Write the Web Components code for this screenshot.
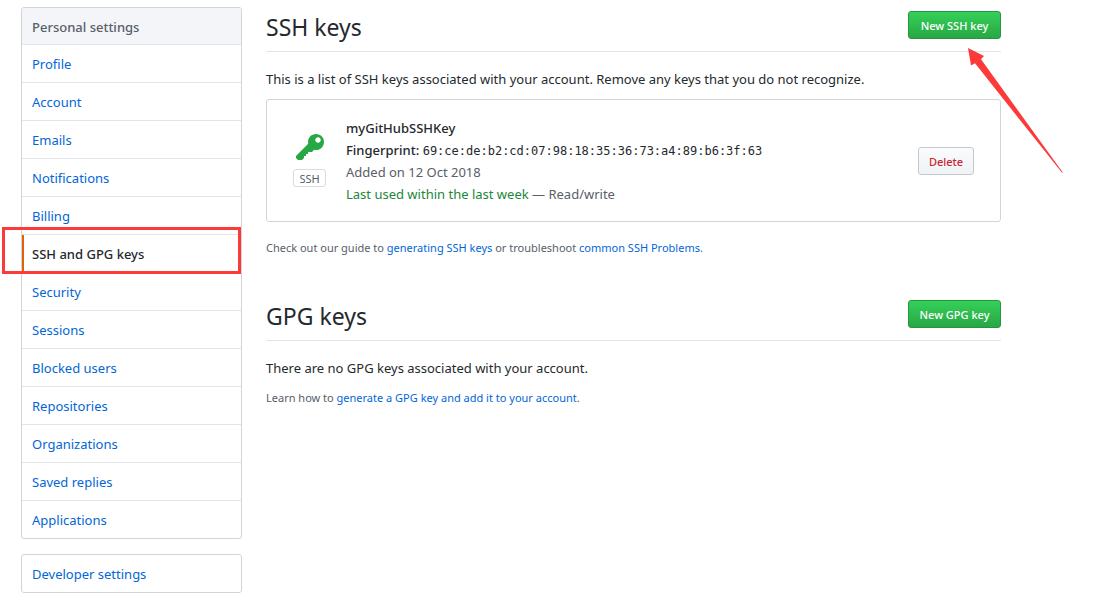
<!DOCTYPE html>
<html lang="en">
<head>
<meta charset="utf-8">
<title>SSH and GPG keys</title>
<style>
  body { margin: 0; background: #fff; color: #24292e; font: 13px/22px "Noto Sans", "Open Sans", sans-serif; }
</style>
</head>
<body>
<settings-page>
  <side-menu slot="side" heading="Personal settings">
    <menu-item>Profile</menu-item>
    <menu-item>Account</menu-item>
    <menu-item>Emails</menu-item>
    <menu-item>Notifications</menu-item>
    <menu-item>Billing</menu-item>
    <menu-item selected>SSH and GPG keys</menu-item>
    <menu-item>Security</menu-item>
    <menu-item>Sessions</menu-item>
    <menu-item>Blocked users</menu-item>
    <menu-item>Repositories</menu-item>
    <menu-item>Organizations</menu-item>
    <menu-item>Saved replies</menu-item>
    <menu-item>Applications</menu-item>
  </side-menu>
  <side-menu slot="side">
    <menu-item>Developer settings</menu-item>
  </side-menu>

  <key-section heading="SSH keys">
    <action-button slot="action" kind="primary" pointed>New SSH key</action-button>
    <span slot="intro">This is a list of SSH keys associated with your account. Remove any keys that you do not recognize.</span>
    <ssh-key-card>
      <span slot="name">myGitHubSSHKey</span>
      <span slot="fingerprint">69:ce:de:b2:cd:07:98:18:35:36:73:a4:89:b6:3f:63</span>
      <span slot="added">Added on 12 Oct 2018</span>
      <span slot="used">Last used within the last week</span>
      <span slot="access">Read/write</span>
    </ssh-key-card>
    <help-note>Check out our guide to <text-link>generating SSH keys</text-link> or troubleshoot <text-link>common SSH Problems</text-link>.</help-note>
  </key-section>

  <key-section heading="GPG keys">
    <action-button slot="action" kind="primary">New GPG key</action-button>
    <span slot="intro">There are no GPG keys associated with your account.</span>
    <help-note>Learn how to <text-link>generate a GPG key and add it to your account</text-link>.</help-note>
  </key-section>
</settings-page>

<script>
class BaseElement extends HTMLElement {
  connectedCallback() {
    if (!this.shadowRoot) this.attachShadow({ mode: 'open' }).innerHTML = this.view();
  }
}

customElements.define('settings-page', class extends BaseElement {
  view() { return `
    <style>
      :host { display: block; }
      .layout { display: grid; grid-template-columns: 221px minmax(0, 1fr); gap: 24px; max-width: 980px; padding: 7px 21px 19px; }
      nav { display: flex; flex-direction: column; gap: 15px; }
      main { display: flex; flex-direction: column; gap: 41px; padding-top: 4px; }
    </style>
    <div class="layout">
      <nav aria-label="Settings"><slot name="side"></slot></nav>
      <main><slot></slot></main>
    </div>`; }
});

customElements.define('side-menu', class extends BaseElement {
  view() {
    const heading = this.getAttribute('heading');
    return `
    <style>
      :host { display: block; border: 1px solid #d1d5da; border-radius: 3px; }
      h3 { margin: 0; padding: 8px 10px 6px; border-bottom: 1px solid #e1e4e8; border-radius: 2px 2px 0 0; background: #f3f5f8; color: #586069; font-size: 13px; line-height: 22px; font-weight: 500; }
      ::slotted(:not(:last-child)) { border-bottom: 1px solid #e1e4e8; }
    </style>
    ${heading ? `<h3>${heading}</h3>` : ''}
    <slot></slot>`;
  }
});

customElements.define('menu-item', class extends BaseElement {
  view() { return `
    <style>
      :host { display: block; position: relative; }
      a { display: block; padding: 8px 10px 7px; color: #0366d6; text-decoration: none; }
      :host([selected]) a { padding-left: 8px; border-left: 2px solid #e36209; color: #24292e; font-weight: 500; }
      .frame { position: absolute; inset: -8px 0 -2px -20px; border: 3px solid #fc3a3a; pointer-events: none; z-index: 1; }
    </style>
    <a href="#"><slot></slot></a>
    ${this.hasAttribute('selected') ? '<div class="frame"></div>' : ''}`; }
});

customElements.define('key-section', class extends BaseElement {
  view() { return `
    <style>
      :host { display: block; }
      header { display: flex; justify-content: space-between; align-items: center; padding-bottom: 12px; border-bottom: 1px solid #e1e4e8; }
      h2 { margin: 0; font-size: 23px; line-height: 28px; font-weight: 400; padding-top: 2px; margin-bottom: -2px; }
      p { margin: 16px 0 0; }
    </style>
    <section>
      <header><h2>${this.getAttribute('heading')}</h2><slot name="action"></slot></header>
      <p><slot name="intro"></slot></p>
      <slot></slot>
    </section>`; }
});

customElements.define('action-button', class extends BaseElement {
  view() { return `
    <style>
      :host { display: block; position: relative; flex: none; }
      button { display: block; box-sizing: border-box; min-width: 56px; height: 28px; padding: 2px 8px 0; border: 1px solid #c5c9cd; border-radius: 3px; background: linear-gradient(#fafbfc, #eff3f6); color: #cb2431; font: 500 11px/20px "Noto Sans", "Open Sans", sans-serif; white-space: nowrap; }
      :host([kind="primary"]) button { min-width: 93px; border-color: #269440; background: linear-gradient(#34d058, #28a745); color: #fff; }
      svg { position: absolute; top: 37px; left: 60px; pointer-events: none; z-index: 1; }
    </style>
    <button type="button"><slot></slot></button>
    ${this.hasAttribute('pointed') ? `<svg width="96" height="126" viewBox="0 0 96 126" fill="#fc3a3a" aria-hidden="true"><path d="M0 0 16 8 13 11.3 95 124.8 94 124.8 7 15.3 3 17.6Z"/></svg>` : ''}`; }
});

customElements.define('ssh-key-card', class extends BaseElement {
  view() { return `
    <style>
      :host { display: flex; align-items: center; margin: 9px 0 15px; padding: 17px 26px 16px; border: 1px solid #d1d5da; border-radius: 3px; }
      .kind { flex: none; display: flex; flex-direction: column; align-items: center; gap: 5px; width: 33px; margin-right: 20px; padding-bottom: 4px; }
      svg { display: block; }
      .tag { box-sizing: border-box; width: 33px; height: 18px; border: 1px solid #d9dbde; border-radius: 3px; color: #586069; font-size: 11px; line-height: 17px; text-align: center; }
      .details { flex: 1; min-width: 0; }
      .muted { color: #586069; }
      .used { color: #22863a; }
      strong { font-weight: 500; }
      code { font: 12px/20px "DejaVu Sans Mono", "Liberation Mono", monospace; }
    </style>
    <div class="kind">
      <svg width="28" height="32" viewBox="0 0 14 16" fill="#28a745" aria-hidden="true"><path fill-rule="evenodd" d="M12.83 2.17C12.08 1.42 11.14 1.03 10 1c-1.13.03-2.08.42-2.83 1.17S6.04 3.86 6.01 5c0 .3.03.59.09.89L0 12v1l1 1h2l1-1v-1h1v-1h1v-1h2l1.09-1.11c.3.08.59.11.91.11 1.14-.03 2.08-.42 2.83-1.17S13.97 6.14 14 5c-.03-1.14-.42-2.08-1.17-2.83zM11 5.38c-.77 0-1.38-.61-1.38-1.38 0-.77.61-1.38 1.38-1.38.77 0 1.38.61 1.38 1.38 0 .77-.61 1.38-1.38 1.38z"/></svg>
      <div class="tag">SSH</div>
    </div>
    <div class="details">
      <div><strong><slot name="name"></slot></strong></div>
      <div><strong>Fingerprint:</strong> <code><slot name="fingerprint"></slot></code></div>
      <div class="muted"><slot name="added"></slot></div>
      <div class="muted"><span class="used"><slot name="used"></slot></span> — <slot name="access"></slot></div>
    </div>
    <action-button>Delete</action-button>`; }
});

customElements.define('help-note', class extends BaseElement {
  view() { return `
    <style>
      :host { display: block; margin-top: 8px; color: #586069; font-size: 11px; line-height: 22px; }
    </style>
    <slot></slot>`; }
});

customElements.define('text-link', class extends BaseElement {
  view() { return `
    <style>
      :host { display: inline; }
      a { color: #0366d6; text-decoration: none; }
    </style><a href="#"><slot></slot></a>`; }
});
</script>
</body>
</html>
